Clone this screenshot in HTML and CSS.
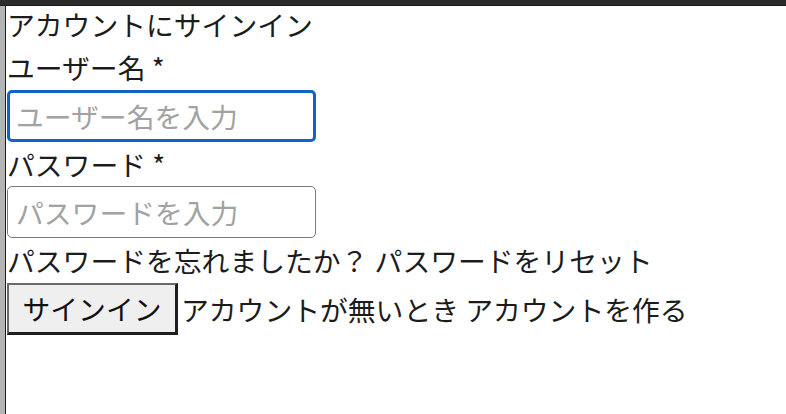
FILE: index.html
```html
<!DOCTYPE html>
<html lang="ja">
<head>
<meta charset="utf-8">
<title>サインイン</title>
<link rel="stylesheet" href="styles.css">
</head>
<body>
<div class="frame">
  <div class="topbar"></div>
  <div class="viewport">
    <div class="side-strip"></div>
    <main class="page">
      <form class="signin">
        <h1 class="title">アカウントにサインイン</h1>
        <label class="label" for="username">ユーザー名 *</label>
        <input class="field field-active" id="username" type="text" placeholder="ユーザー名を入力">
        <label class="label label-tight" for="password">パスワード *</label>
        <input class="field" id="password" type="password" placeholder="パスワードを入力">
        <p class="line">パスワードを忘れましたか？ パスワードをリセット</p>
        <div class="line action-row"><button class="submit" type="button">サインイン</button><span class="after">アカウントが無いとき アカウントを作る</span></div>
      </form>
    </main>
  </div>
</div>
</body>
</html>
```
FILE: styles.css
```css
* { box-sizing: border-box; }
html, body {
  margin: 0;
  padding: 0;
  background: #ffffff;
}
body {
  font-family: "Noto Sans CJK JP", "Noto Sans", sans-serif;
  color: #1c1c1c;
  font-size: 27.8px;
}
.frame {
  width: 786px;
  height: 414px;
  display: flex;
  flex-direction: column;
  overflow: hidden;
}
.topbar {
  height: 6px;
  flex: 0 0 6px;
  background: #2b2b2b;
  border-bottom: 1px solid #1a1a1a;
}
.viewport {
  flex: 1;
  display: flex;
}
.side-strip {
  width: 6px;
  flex: 0 0 6px;
  background: #b4b4b4;
  border-right: 1px solid #1e1e1e;
}
.page {
  flex: 1;
  padding-left: 1px;
}
.signin {
  display: flex;
  flex-direction: column;
  align-items: flex-start;
  margin: 0;
}
.title {
  margin: 0;
  font-size: 27.8px;
  font-weight: normal;
  line-height: 40px;
  margin-top: -2px;
}
.label {
  display: block;
  line-height: 44px;
  height: 46px;
  padding-top: 1px;
}
.label-tight {
  height: 44px;
  padding-top: 0;
}
.field {
  width: 309px;
  height: 52px;
  font-family: inherit;
  font-size: 27.8px;
  color: #1c1c1c;
  padding: 0 8px;
  border: 1.5px solid #7a7a7a;
  border-radius: 5px;
  background: #fff;
  outline: none;
}
.field::placeholder {
  color: #a2a2a2;
}
.field-active {
  border: 3px solid #1262c9;
  padding: 0 6px;
}
.line {
  margin: 0;
  line-height: 44px;
  height: 45px;
}
.action-row {
  display: flex;
  align-items: center;
  height: 52px;
  white-space: nowrap;
}
.submit {
  width: 171px;
  height: 52px;
  font-family: inherit;
  font-size: 27.8px;
  color: #111;
  background: #efefef;
  border-style: solid;
  border-width: 2px 3px 3px 2px;
  border-color: #6a6a6a #1e1e1e #1e1e1e #6a6a6a;
  border-radius: 0;
  padding: 0;
  line-height: 1;
}
.after {
  padding-left: 3px;
}
```
